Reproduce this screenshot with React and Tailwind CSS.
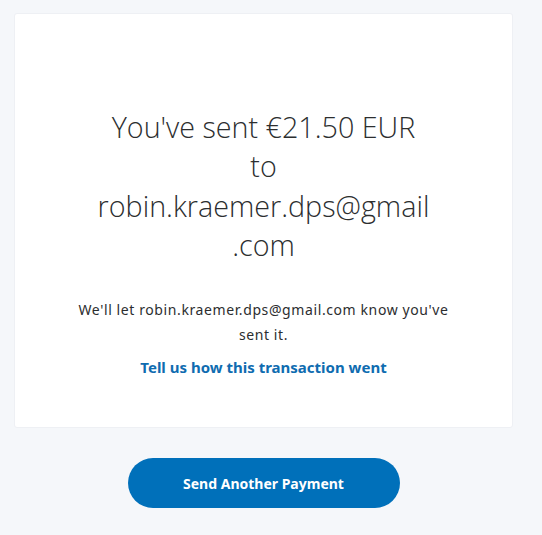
export default function App() {
  return (
    <div className="min-h-[535px] w-full bg-[#f5f7fa] pt-[13px] pl-[14px] pr-[29px]">
      <div className="w-[499px] h-[415px] bg-white border border-[#eef0f4] rounded-[3px] flex flex-col items-center pt-[93px]">
        <h1 className="text-center text-[28.7px] leading-[39.3px] font-light text-[#2c2e2f] font-['Open_Sans',sans-serif]">
          <span className="block">You've sent €21.50 EUR</span>
          <span className="block">to</span>
          <span className="block">robin.kraemer.dps@gmail</span>
          <span className="block">.com</span>
        </h1>
        <p className="mt-[33px] w-[400px] text-center text-[14px] leading-[25px] tracking-[0.6px] text-[#2c2e2f] font-['Noto_Sans',sans-serif]">
          We'll let robin.kraemer.dps@gmail.com know you've sent it.
        </p>
        <a className="mt-[10px] text-[15px] leading-[20px] font-bold text-[#0f6cb0] font-['Noto_Sans',sans-serif]">
          Tell us how this transaction went
        </a>
      </div>
      <div className="w-[499px] flex justify-center mt-[30px]">
        <button className="w-[272px] h-[50px] rounded-full bg-[#0070ba] text-white text-[14px] font-bold font-['Noto_Sans',sans-serif]">
          Send Another Payment
        </button>
      </div>
    </div>
  );
}
